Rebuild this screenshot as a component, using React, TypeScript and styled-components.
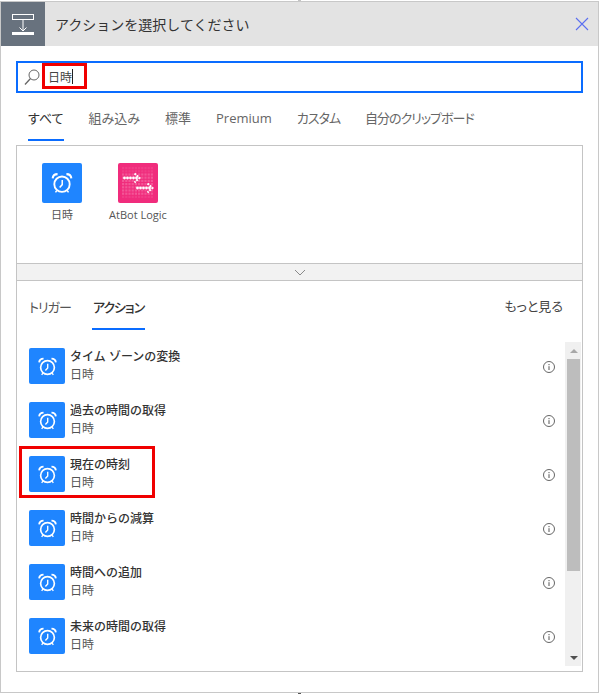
import styled, { createGlobalStyle } from "styled-components";

const GlobalStyle = createGlobalStyle`
	html, body {
		margin: 0;
		padding: 0;
		background: #ffffff;
	}
	*, *::before, *::after {
		box-sizing: border-box;
	}
`;

const FONT = `"Open Sans", "Noto Sans CJK JP", sans-serif`;

const tabs = [
	{ label: "すべて" },
	{ label: "組み込み" },
	{ label: "標準" },
	{ label: "Premium" },
	{ label: "カスタム", tight: true },
	{ label: "自分のクリップボード", tight: true },
];

const actions = [
	"タイム ゾーンの変換",
	"過去の時間の取得",
	"現在の時刻",
	"時間からの減算",
	"時間への追加",
	"未来の時間の取得",
];

function ClockIcon({ size }: { size: number }) {
	return (
		<svg width={size} height={size} viewBox="0 0 24 24" fill="none" stroke="#fff" strokeWidth="1.6">
			<circle cx="12" cy="13" r="6.6" />
			<path d="M12.2 9.4V13.4L10 15.8" strokeWidth="1.3" />
			<path d="M4 8C4.2 5.8 5.8 4.4 8.2 4.4" strokeWidth="1.8" />
			<path d="M20 8C19.8 5.8 18.2 4.4 15.8 4.4" strokeWidth="1.8" />
			<path d="M7.6 18.4L6.4 20M16.4 18.4L17.6 20" strokeWidth="1.3" />
		</svg>
	);
}

function LogicIcon() {
	const grid = [];
	for (let y = 4; y < 36; y += 3.2) {
		for (let x = 4; x < 36; x += 3.2) {
			const inBand = y > 9 && y < 31;
			grid.push(<rect key={`${x}-${y}`} x={x} y={y} width="2.2" height="2.2" fill="#fff" opacity={inBand ? 0.2 : 0.08} />);
		}
	}
	const upper = [6.5, 9.5, 12.5, 15.5, 18.5];
	const lower = [19.5, 22.5, 25.5, 28.5, 31.5];
	return (
		<svg width="40" height="40" viewBox="0 0 40 40">
			{grid}
			{upper.map((x) => (
				<circle key={x} cx={x} cy="15" r="1.4" fill="#fff" />
			))}
			<path d="M16.5 10.5L21.5 15L16.5 19.5" fill="none" stroke="#fff" strokeWidth="2" strokeDasharray="2 1" />
			{lower.map((x) => (
				<circle key={x} cx={x} cy="25" r="1.4" fill="#fff" />
			))}
			<path d="M29.5 20.5L34.5 25L29.5 29.5" fill="none" stroke="#fff" strokeWidth="2" strokeDasharray="2 1" />
		</svg>
	);
}

function InfoIcon() {
	return (
		<svg width="14" height="14" viewBox="0 0 14 14" fill="none">
			<circle cx="7" cy="7" r="5.5" stroke="#666" strokeWidth="1" />
			<path d="M7 6.2V10M7 4V5.2" stroke="#555" strokeWidth="1" />
		</svg>
	);
}

export default function App() {
	return (
		<>
			<GlobalStyle />
			<Tick $color="#c4c4c4" />
			<Frame>
				<Header>
					<HeaderIcon>
						<svg width="22" height="21" viewBox="0 0 22 21" fill="none">
							<rect x="0.5" y="0.5" width="21" height="5" stroke="#fff" strokeWidth="1" />
							<path d="M11 6V17M7.5 13.5L11 17L14.5 13.5" stroke="#fff" strokeWidth="1" />
							<rect x="0" y="18" width="22" height="3" fill="#fff" />
						</svg>
					</HeaderIcon>
					<HeaderTitle>アクションを選択してください</HeaderTitle>
					<CloseIcon width="14" height="14" viewBox="0 0 14 14">
						<path d="M1 1L13 13M13 1L1 13" stroke="#5b6ff0" strokeWidth="1.1" fill="none" />
					</CloseIcon>
				</Header>
				<Body>
					<SearchBox>
						<svg width="16" height="18" viewBox="0 0 16 18" fill="none">
							<circle cx="10" cy="7" r="5" stroke="#666" strokeWidth="1" />
							<path d="M6.5 10.5L1 16.5" stroke="#666" strokeWidth="1.3" />
						</svg>
						<SearchText>
							日時
							<Caret />
						</SearchText>
					</SearchBox>
					<TabRow>
						{tabs.map((tab, i) => (
							<Tab key={tab.label} $active={i === 0} $tight={tab.tight}>
								{tab.label}
							</Tab>
						))}
					</TabRow>
					<Panel>
						<ConnectorGrid>
							<Connector>
								<ConnectorTile $color="#1f85ff">
									<ClockIcon size={28} />
								</ConnectorTile>
								<ConnectorName>日時</ConnectorName>
							</Connector>
							<Connector>
								<ConnectorTile $color="#f02c7c">
									<LogicIcon />
								</ConnectorTile>
								<ConnectorName>AtBot Logic</ConnectorName>
							</Connector>
						</ConnectorGrid>
						<Expander>
							<svg width="12" height="7" viewBox="0 0 12 7" fill="none">
								<path d="M1 1L6 6L11 1" stroke="#8a8a8a" strokeWidth="1" />
							</svg>
						</Expander>
						<SubTabRow>
							<SubTab>トリガー</SubTab>
							<SubTab $active>アクション</SubTab>
							<MoreLink>もっと見る</MoreLink>
						</SubTabRow>
						<ListArea>
							<ActionList>
								{actions.map((action, i) => (
									<ActionRow key={action} $marked={i === 2}>
										<ActionTile>
											<ClockIcon size={25} />
										</ActionTile>
										<ActionText>
											<ActionTitle>{action}</ActionTitle>
											<ActionSub>日時</ActionSub>
										</ActionText>
										<InfoSlot>
											<InfoIcon />
										</InfoSlot>
									</ActionRow>
								))}
							</ActionList>
							<ScrollTrack>
								<ScrollArrow $up />
								<ScrollThumb />
								<ScrollArrow />
							</ScrollTrack>
						</ListArea>
					</Panel>
				</Body>
			</Frame>
			<Tick $color="#555" />
		</>
	);
}

const Tick = styled.div<{ $color: string }>`
	width: 3px;
	height: 1px;
	margin-left: 298px;
	background: ${(p) => p.$color};
`;

const Frame = styled.div`
	width: 599px;
	height: 692px;
	border: 1px solid #c8c8c8;
	font-family: ${FONT};
	color: #333;
	overflow: hidden;
`;

const Header = styled.div`
	height: 44px;
	background: #e3e3e3;
	display: flex;
	align-items: center;
	padding-right: 9px;
`;

const HeaderIcon = styled.div`
	width: 44px;
	height: 44px;
	background: #68727e;
	display: flex;
	align-items: center;
	justify-content: center;
`;

const HeaderTitle = styled.div`
	flex: 1;
	margin-left: 10px;
	font-size: 14px;
	color: #333;
`;

const CloseIcon = styled.svg`
	display: block;
`;

const Body = styled.div`
	padding: 15px 15px 0 15px;
`;

const SearchBox = styled.div`
	height: 32px;
	border: 2px solid #0a6cff;
	display: flex;
	align-items: center;
	padding-left: 6px;
`;

const SearchText = styled.div`
	display: flex;
	align-items: center;
	align-self: flex-start;
	margin-left: 2px;
	padding: 1px 0 0 3px;
	width: 45px;
	height: 26px;
	border: 3px solid #f00000;
	font-size: 12px;
	color: #444;
`;

const Caret = styled.span`
	width: 1px;
	height: 15px;
	background: #222;
`;

const TabRow = styled.div`
	display: flex;
	height: 52px;
	padding-left: 12px;
	gap: 25px;
`;

const Tab = styled.div<{ $active?: boolean; $tight?: boolean }>`
	height: 48px;
	line-height: 50px;
	font-size: 13px;
	font-weight: 400;
	font-feature-settings: "palt";
	letter-spacing: ${(p) => (p.$tight ? "-1px" : "0")};
	color: ${(p) => (p.$active ? "#333" : "#666")};
	border-bottom: ${(p) => (p.$active ? "2px solid #0a6cff" : "none")};
`;

const Panel = styled.div`
	height: 527px;
	border: 1px solid #c4c4c4;
	display: flex;
	flex-direction: column;
`;

const ConnectorGrid = styled.div`
	height: 117px;
	display: flex;
	gap: 16px;
	padding: 17px 0 0 15px;
`;

const Connector = styled.div`
	width: 60px;
	display: flex;
	flex-direction: column;
	align-items: center;
`;

const ConnectorTile = styled.div<{ $color: string }>`
	width: 40px;
	height: 40px;
	border-radius: 2px;
	background: ${(p) => p.$color};
	display: flex;
	align-items: center;
	justify-content: center;
`;

const ConnectorName = styled.div`
	margin-top: 4px;
	font-size: 11px;
	line-height: 16px;
	color: #555;
	white-space: nowrap;
`;

const Expander = styled.div`
	height: 18px;
	background: #f2f2f2;
	border-top: 1px solid #c4c4c4;
	border-bottom: 1px solid #c4c4c4;
	display: flex;
	align-items: center;
	justify-content: center;
`;

const SubTabRow = styled.div`
	height: 61px;
	display: flex;
	align-items: flex-start;
	gap: 20px;
	padding: 0 19px 0 11px;
	font-feature-settings: "palt";
`;

const SubTab = styled.div<{ $active?: boolean }>`
	height: 49px;
	padding: 0 1px;
	line-height: 52px;
	font-size: 13px;
	letter-spacing: -1px;
	font-weight: ${(p) => (p.$active ? 500 : 400)};
	color: ${(p) => (p.$active ? "#333" : "#555")};
	border-bottom: ${(p) => (p.$active ? "2px solid #0a6cff" : "none")};
`;

const MoreLink = styled.div`
	margin-left: auto;
	line-height: 50px;
	font-size: 13px;
	color: #444;
`;

const ListArea = styled.div`
	flex: 1;
	display: flex;
	min-height: 0;
	margin: 0 0 5px 0;
`;

const ActionList = styled.div`
	flex: 1;
	padding: 6px 0 0 12px;
`;

const ActionRow = styled.div<{ $marked?: boolean }>`
	position: relative;
	height: 54px;
	display: flex;
	align-items: flex-start;
	padding-right: 9px;

	${(p) =>
		p.$marked &&
		`&::after {
			content: "";
			position: absolute;
			left: -10px;
			top: -10px;
			width: 136px;
			height: 52px;
			border: 3px solid #f00000;
		}`}
`;

const ActionTile = styled.div`
	width: 36px;
	height: 36px;
	border-radius: 2px;
	background: #1f85ff;
	display: flex;
	align-items: center;
	justify-content: center;
`;

const ActionText = styled.div`
	flex: 1;
	margin-left: 5px;
`;

const ActionTitle = styled.div`
	font-size: 12px;
	line-height: 18px;
	font-weight: 500;
	color: #333;
`;

const ActionSub = styled.div`
	font-size: 12px;
	line-height: 18px;
	color: #555;
`;

const InfoSlot = styled.div`
	display: flex;
	margin-top: 12px;
`;

const ScrollTrack = styled.div`
	width: 16px;
	margin-right: 1px;
	padding-right: 1px;
	background: #f0f0f0;
	display: flex;
	flex-direction: column;
	align-items: flex-end;
`;

const ScrollArrow = styled.div<{ $up?: boolean }>`
	height: 17px;
	width: 13px;
	flex: none;
	display: flex;
	align-items: center;
	justify-content: center;

	&::before {
		content: "";
		border-left: 4px solid transparent;
		border-right: 4px solid transparent;
		${(p) => (p.$up ? "border-bottom: 4px solid #a8a8a8;" : "border-top: 4px solid #505050;")}
	}
`;

const ScrollThumb = styled.div`
	width: 13px;
	height: 212px;
	background: #bdbdbd;
	margin-bottom: auto;
`;
